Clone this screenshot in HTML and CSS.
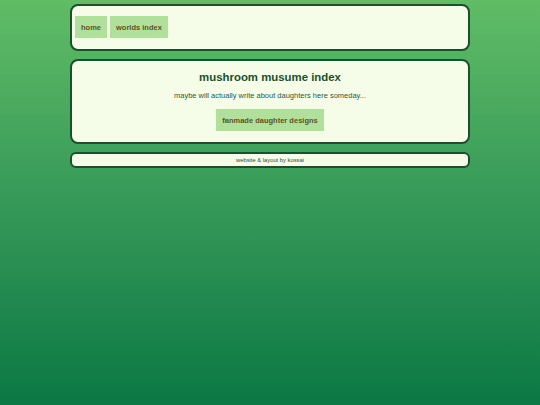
FILE: index.html
```html
<!DOCTYPE html>
<html>
<head>
<meta charset="utf-8">
<link rel="stylesheet" href="styles.css">
</head>
<body>
<div class="wrap">
  <nav class="box nav">
    <a class="btn" href="#">home</a>
    <a class="btn" href="#">worlds index</a>
  </nav>
  <main class="box main">
    <h1 class="title">mushroom musume index</h1>
    <p class="sub">maybe will actually write about daughters here someday...</p>
    <a class="btn big" href="#">fanmade daughter designs</a>
  </main>
  <footer class="box foot">website &amp; layout by kossai</footer>
</div>
</body>
</html>
```
FILE: styles.css
```css
html, body {
  margin: 0;
  height: 100%;
}
body {
  background: linear-gradient(to bottom, #60bc65 0%, #3a9c5a 45%, #0b7844 100%);
  font-family: "Liberation Sans", Arial, sans-serif;
  padding-top: 4px;
  box-sizing: border-box;
}
.wrap {
  width: 400px;
  margin: 0 auto;
  display: flex;
  flex-direction: column;
  gap: 8px;
}
.box {
  background: #f5fde9;
  border: 2px solid #1c4f2d;
  border-radius: 8px;
  box-sizing: border-box;
}
.nav {
  display: flex;
  gap: 3px;
  padding: 10px 3px 12px;
  height: 47px;
}
.btn {
  display: inline-flex;
  align-items: center;
  justify-content: center;
  height: 22px;
  padding: 0 6px;
  background: #b0e09b;
  color: #5e5424;
  font-size: 7.5px;
  font-weight: bold;
  text-decoration: none;
}
.main {
  display: flex;
  flex-direction: column;
  align-items: center;
  padding: 8px 10px 0;
  height: 85px;
}
.title {
  margin: 0;
  font-size: 11.4px;
  line-height: 16px;
  color: #1b4f2c;
}
.sub {
  margin: 6px 0 8px;
  font-size: 7.5px;
  line-height: 10px;
  color: #2c5a3a;
}
.btn.big {
  width: 108px;
  padding: 0;
}
.foot {
  height: 16px;
  border-radius: 6px;
  font-size: 5.8px;
  color: #2c4a38;
  display: flex;
  align-items: center;
  justify-content: center;
}
```
